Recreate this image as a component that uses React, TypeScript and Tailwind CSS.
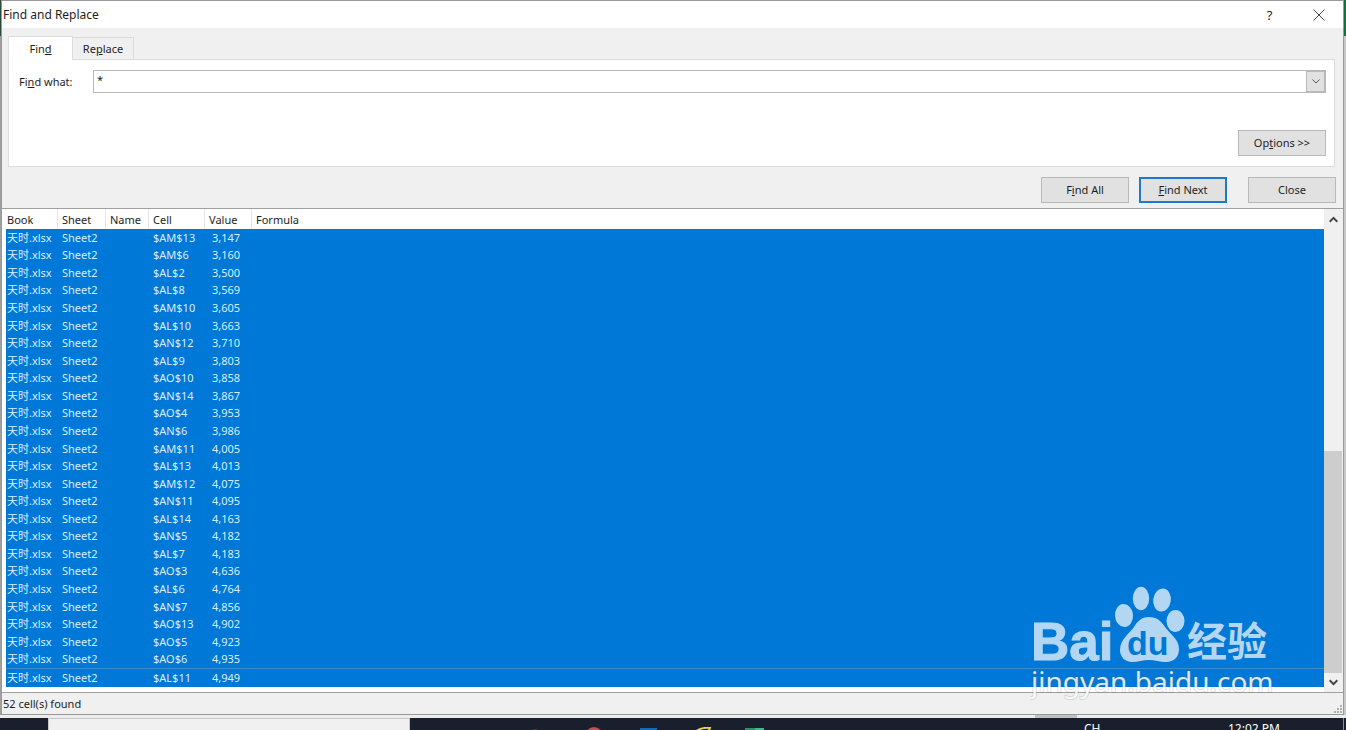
import { useState } from "react";

interface FoundCell {
  cell: string;
  value: string;
}

const BOOK = "天时.xlsx";
const SHEET = "Sheet2";

const found: FoundCell[] = [
  { cell: "$AM$13", value: "3,147" },
  { cell: "$AM$6", value: "3,160" },
  { cell: "$AL$2", value: "3,500" },
  { cell: "$AL$8", value: "3,569" },
  { cell: "$AM$10", value: "3,605" },
  { cell: "$AL$10", value: "3,663" },
  { cell: "$AN$12", value: "3,710" },
  { cell: "$AL$9", value: "3,803" },
  { cell: "$AO$10", value: "3,858" },
  { cell: "$AN$14", value: "3,867" },
  { cell: "$AO$4", value: "3,953" },
  { cell: "$AN$6", value: "3,986" },
  { cell: "$AM$11", value: "4,005" },
  { cell: "$AL$13", value: "4,013" },
  { cell: "$AM$12", value: "4,075" },
  { cell: "$AN$11", value: "4,095" },
  { cell: "$AL$14", value: "4,163" },
  { cell: "$AN$5", value: "4,182" },
  { cell: "$AL$7", value: "4,183" },
  { cell: "$AO$3", value: "4,636" },
  { cell: "$AL$6", value: "4,764" },
  { cell: "$AN$7", value: "4,856" },
  { cell: "$AO$13", value: "4,902" },
  { cell: "$AO$5", value: "4,923" },
  { cell: "$AO$6", value: "4,935" },
  { cell: "$AL$11", value: "4,949" },
];

const buttonBase = "w-[88px] h-[26px] flex items-center justify-center bg-[#e1e1e1]";

function TitleBar() {
  return (
    <div className="h-[27px] bg-white flex items-center justify-between pl-px">
      <h1 className="text-xs">Find and Replace</h1>
      <div className="flex">
        <button aria-label="Help" className="w-[49px] h-[27px] flex items-center justify-center text-[13px]">?</button>
        <button aria-label="Close window" className="w-[49px] h-[27px] flex items-center justify-center">
          <svg width="12" height="12" viewBox="0 0 12 12" stroke="#444" strokeWidth="1">
            <path d="M0.5 0.5 11.5 11.5M11.5 0.5 0.5 11.5" />
          </svg>
        </button>
      </div>
    </div>
  );
}

function SearchPanel() {
  const [what, setWhat] = useState("*");

  return (
    <div className="pl-[6px] pr-2 pt-2">
      <div className="flex items-end" role="tablist">
        <button role="tab" aria-selected="true" className="w-[65px] h-6 -mb-px border border-b-0 border-[#dcdcdc] bg-white relative">
          Fin<u>d</u>
        </button>
        <button role="tab" aria-selected="false" className="w-[61px] h-[22px] border border-l-0 border-b-0 border-[#dcdcdc]">
          Re<u>p</u>lace
        </button>
      </div>
      <div className="bg-white border border-[#dcdcdc] pt-[10px] pl-[10px] pr-2 pb-[10px]">
        <div className="flex items-center">
          <label htmlFor="what" className="w-[74px]">
            Fi<u>n</u>d what:
          </label>
          <div className="flex flex-1 h-[23px] border border-[#b9b9b9]">
            <input
              id="what"
              type="text"
              value={what}
              onChange={(e) => setWhat(e.target.value)}
              className="flex-1 min-w-0 px-[3px] pb-1 outline-none"
            />
            <button aria-label="Recent searches" className="w-[19px] border border-[#b9b9b9] bg-[#e1e1e1] flex items-center justify-center">
              <svg width="8" height="5" viewBox="0 0 8 5" fill="none" stroke="#555">
                <path d="M0.5 0.5 4 4 7.5 0.5" />
              </svg>
            </button>
          </div>
        </div>
        <div className="flex justify-end mt-[37px]">
          <button className={`${buttonBase} border border-[#b9b9b9]`}>
            <span>
              Op<u>t</u>ions &gt;&gt;
            </span>
          </button>
        </div>
      </div>
    </div>
  );
}

function Actions() {
  return (
    <div className="flex justify-end pt-[10px] pb-[5px] pr-[7px]">
      <button className={`${buttonBase} border border-[#b9b9b9]`}>
        <span>
          F<u>i</u>nd All
        </span>
      </button>
      <button className={`${buttonBase} border-2 border-[#1f78c8] ml-[10px]`}>
        <span>
          <u>F</u>ind Next
        </span>
      </button>
      <button className={`${buttonBase} border border-[#b9b9b9] ml-[21px]`}>Close</button>
    </div>
  );
}

function ScrollBar() {
  return (
    <div className="w-[19px] bg-[#f0f0f0] flex flex-col pr-px">
      <button aria-label="Scroll up" className="h-[19px] pt-[2px] flex items-center justify-center">
        <svg width="9" height="7" viewBox="0 0 9 7" fill="none" stroke="#444" strokeWidth="2">
          <path d="M0.7 5.7 4.5 1.9 8.3 5.7" />
        </svg>
      </button>
      <div className="flex-1 flex flex-col justify-end">
        <div className="h-1/2 bg-[#cdcdcd]" />
      </div>
      <button aria-label="Scroll down" className="h-[19px] flex items-center justify-center">
        <svg width="9" height="7" viewBox="0 0 9 7" fill="none" stroke="#444" strokeWidth="2">
          <path d="M0.7 1.3 4.5 5.1 8.3 1.3" />
        </svg>
      </button>
    </div>
  );
}

function Results() {
  const head = "p-0 pt-[2px] pl-1 font-normal text-left border-l border-[#e5e5e5]";

  return (
    <div className="flex bg-white border-y border-[#a0a0a0]">
      <div className="flex-1 pl-1 pb-[5px]">
        <table className="w-full h-[478px] table-fixed border-separate border-spacing-0">
          <colgroup>
            <col className="w-[51px]" />
            <col className="w-12" />
            <col className="w-[43px]" />
            <col className="w-14" />
            <col className="w-[47px]" />
            <col />
          </colgroup>
          <thead>
            <tr className="h-5">
              <th className="p-0 pt-[2px] pl-px font-normal text-left">Book</th>
              <th className={head}>Sheet</th>
              <th className={head}>Name</th>
              <th className={head}>Cell</th>
              <th className={head}>Value</th>
              <th className={head}>Formula</th>
            </tr>
          </thead>
          <tbody className="bg-[#0078d7] text-[#d8efff] leading-4">
            {found.map((item) => (
              <tr key={item.cell} className="whitespace-nowrap last:[&>td]:border-t last:[&>td]:border-[#3c8ccb]">
                <td className="p-0 pl-px">{BOOK}</td>
                <td className="p-0 pl-[5px]">{SHEET}</td>
                <td className="p-0" />
                <td className="p-0 pl-[5px]">{item.cell}</td>
                <td className="p-0 pl-2">{item.value}</td>
                <td className="p-0" />
              </tr>
            ))}
          </tbody>
        </table>
      </div>
      <ScrollBar />
    </div>
  );
}

function StatusBar() {
  return (
    <div className="h-[21px] flex items-center justify-between pl-px">
      <span>{found.length * 2} cell(s) found</span>
      <svg width="10" height="10" viewBox="0 0 10 10" fill="#b0b0b0" className="self-end">
        <path d="M7 1h2v2h-2zM4 4h2v2h-2zM7 4h2v2h-2zM1 7h2v2h-2zM4 7h2v2h-2zM7 7h2v2h-2z" />
      </svg>
    </div>
  );
}

function TaskBar() {
  return (
    <div className="h-10 bg-[#1a1f2e] text-white flex items-start">
      <div className="w-[362px] h-10 ml-12 bg-[#f0f0f0] border border-[#c8c8c8]" />
      <svg width="240" height="20" viewBox="0 0 240 20" className="ml-[120px] mt-[9px]">
        <path d="M0 4 q5 -4 10 0z" fill="#4a4438" />
        <circle cx="64" cy="9" r="9" fill="#c0504d" />
        <rect x="110" y="1" width="17" height="16" fill="#1769b5" />
        <path d="M165 5 q6 -5 15 -4 q-1 3 -5 5" fill="none" stroke="#e8cf4a" strokeWidth="2" />
        <rect x="215" y="1" width="10" height="16" fill="#2f8f68" />
        <rect x="225" y="1" width="9" height="16" fill="#3fb98a" />
      </svg>
      <div className="flex-1 h-10 flex justify-end border-r border-[#8a8d94] pt-[3px] mr-[2px] text-xs leading-4">
        <span className="w-36">CH</span>
        <span className="w-[115px]">12:02 PM</span>
      </div>
    </div>
  );
}

function Watermark() {
  return (
    <svg
      width="250"
      height="125"
      viewBox="0 0 250 125"
      className="absolute right-[66px] top-[580px] pointer-events-none"
    >
      <g fill="#b3d7f3">
        <text x="1" y="80" fontSize="53" fontFamily="'Liberation Sans', sans-serif" fontWeight="700" stroke="#b3d7f3" strokeWidth="1">
          Bai
        </text>
        <ellipse cx="94" cy="35.5" rx="9" ry="11.5" transform="rotate(-4 94 35.5)" />
        <ellipse cx="111" cy="18.500" rx="8.2" ry="11.8" />
        <ellipse cx="132" cy="20" rx="8.8" ry="11.5" transform="rotate(8 132 20)" />
        <ellipse cx="145.5" cy="41" rx="9" ry="11" />
        <path d="M119 37c-8 0-12 5-15 10-4 6-14 12-14 23 0 7 5 12 12 12 6 0 11-2 17-2s11 2 17 2c8 0 13-5 13-13 0-10-9-15-14-22-4-6-8-10-16-10z" />
        <text x="157" y="76" fontSize="40" fontFamily="'Noto Sans CJK SC', sans-serif" fontWeight="700">
          经验
        </text>
      </g>
      <text x="97" y="75" fontSize="34" fill="#0078d7" fontFamily="'Liberation Sans', sans-serif" fontWeight="700">
        du
      </text>
      <text
        x="1"
        y="112"
        fontSize="28"
        fill="#fff"
        fillOpacity="0.85"
        stroke="#666"
        strokeOpacity="0.2"
        strokeWidth="2"
        paintOrder="stroke"
        fontFamily="'Noto Sans', sans-serif"
      >
        jingyan.baidu.com
      </text>
    </svg>
  );
}

export default function App() {
  return (
    <div className="relative h-screen overflow-hidden bg-[#ededed] text-[11px] leading-4 text-[#1e1e1e] font-['Noto_Sans','Noto_Sans_CJK_SC',sans-serif]">
      <div className="flex">
        <div className="w-px bg-[#a0a0a0]">
          <div className="h-9 bg-[#2c4a3b]" />
        </div>
        <div className="flex-1 min-w-0 bg-[#f0f0f0] border border-[#999]">
          <TitleBar />
          <SearchPanel />
          <Actions />
          <Results />
          <StatusBar />
        </div>
        <div className="w-[2px] bg-[#c8c8c8]">
          <div className="h-9 bg-[#1a6b40]" />
        </div>
      </div>
      <div className="h-[3px] flex justify-end">
        <div className="w-[42px] mr-[269px] bg-[#c0c0c0]" />
      </div>
      <TaskBar />
      <Watermark />
    </div>
  );
}
